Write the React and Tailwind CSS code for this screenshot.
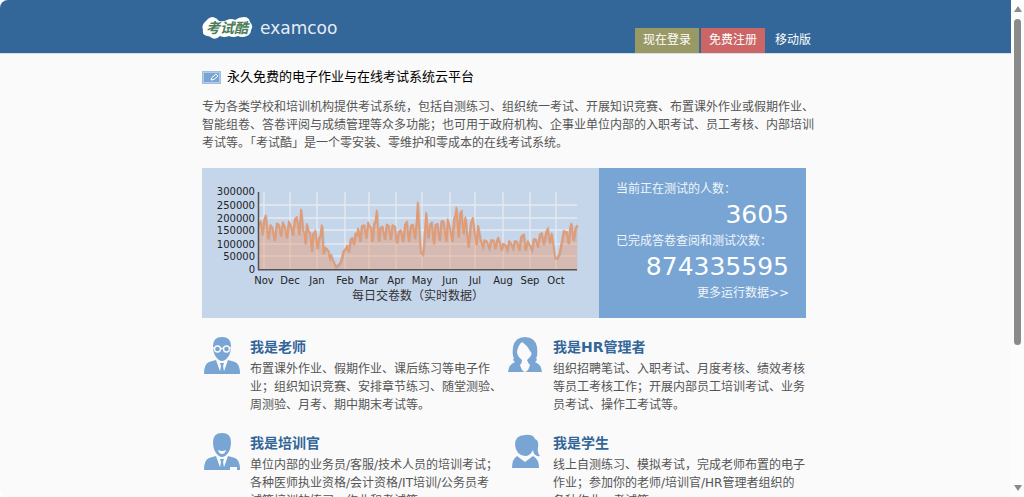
import React from "react";

const months = [
  ["Nov", 62],
  ["Dec", 88],
  ["Jan", 115],
  ["Feb", 143],
  ["Mar", 167],
  ["Apr", 194],
  ["May", 220],
  ["Jun", 248],
  ["Jul", 273],
  ["Aug", 301],
  ["Sep", 328],
  ["Oct", 354],
];

const levels = [
  ["300000", 23],
  ["250000", 37],
  ["200000", 50],
  ["150000", 62],
  ["100000", 76],
  ["50000", 88],
  ["0", 101],
];

// daily papers handed in, drawn on a grid three times finer than the chart
const series =
  "178,180 182,168 187,208 192,165 197,150 204,220 211,180 217,188 223,225 230,175 236,178 242,212 248,172 254,185 260,218 266,170 272,182 278,210 284,162 290,156 297,208 303,133 309,195 313,205 316,236 320,176 326,200 330,203 335,258 339,205 343,205 346,196 352,250 357,218 361,212 365,180 367,190 370,265 375,247 381,252 385,258 389,280 393,270 397,282 402,292 407,306 414,300 420,294 425,280 430,258 436,252 441,242 446,260 451,225 456,218 461,238 466,205 471,208 474,190 480,228 485,183 492,180 498,218 504,173 508,182 513,188 516,228 522,175 526,168 530,136 536,228 541,188 547,184 554,222 560,178 566,182 571,222 577,180 584,183 590,233 596,200 602,195 608,228 615,178 620,170 626,228 632,182 638,178 644,220 650,165 653,112 657,180 662,262 668,268 672,235 678,143 684,218 690,178 695,172 701,235 706,180 712,176 718,225 724,168 730,168 738,228 743,162 750,190 756,228 762,160 766,150 769,127 775,215 780,145 784,138 790,205 796,156 805,246 812,175 818,158 824,205 829,238 834,182 841,222 848,245 853,225 860,228 867,250 873,225 880,225 885,250 890,228 894,218 900,235 904,255 909,236 915,238 921,255 927,228 933,235 938,250 944,228 950,228 957,255 963,215 971,208 976,255 983,228 990,242 995,255 1001,222 1007,222 1013,245 1019,208 1025,204 1031,238 1037,205 1043,190 1049,235 1055,205 1060,240 1065,278 1071,280 1078,265 1085,230 1091,197 1096,202 1100,200 1105,235 1110,190 1114,175 1120,225 1126,190 1132,180";

const Chart = () => (
  <svg
    width="397"
    height="150"
    viewBox="0 0 397 150"
    className="block shrink-0"
    role="img"
    aria-label="每日交卷数"
  >
    <g stroke="#e6eaf1">
      {levels.slice(1, 6).map(([label, y]) => (
        <line key={label} x1="57" x2="375" y1={y} y2={y} strokeWidth="1.3" />
      ))}
      {months.map(([label, x]) => (
        <line key={label} x1={x} x2={x} y1="24" y2="101" strokeWidth="1.3" />
      ))}
    </g>
    <g transform="translate(-2 -3) scale(0.33333)">
      <polygon
        points={`176,314 ${series} 1132,314`}
        fill="#ea9060"
        fillOpacity="0.4"
      />
      <polyline
        points={series}
        fill="none"
        stroke="#a08c8c"
        strokeOpacity="0.4"
        strokeWidth="6"
        transform="translate(2 3)"
      />
      <polyline
        points={series}
        fill="none"
        stroke="#e59a6f"
        strokeWidth="5"
        strokeLinejoin="round"
      />
    </g>
    <path d="M56.5 24V102M56 101.8H375" stroke="#545454" strokeWidth="1.5" fill="none" />
    <g className="text-[10px]" fill="#222">
      {levels.map(([label, y]) => (
        <text key={label} x="53" y={y + 4} textAnchor="end">
          {label}
        </text>
      ))}
      {months.map(([label, x]) => (
        <text key={label} x={x} y="116" textAnchor="middle">
          {label}
        </text>
      ))}
    </g>
    <text x="216" y="132" textAnchor="middle" fill="#333" className="text-[12px]">
      每日交卷数（实时数据）
    </text>
  </svg>
);

const Logo = () => (
  <svg width="52" height="24" viewBox="0 0 52 24" className="block" aria-label="考试酷">
    <path
      d="M4 5Q7 1 11 1Q15 2 17 5Q21 6 25 4Q29 2 33 4Q37 1 42 1Q47 1 48 6Q52 10 49 14Q49 18 45 20Q40 22 36 20Q31 22 27 20Q22 22 18 20Q14 24 10 22Q8 20 5 20Q0 19 1 14Q-1 9 4 5Z"
      fill="#fff"
    />
    <text
      x="25"
      y="17"
      textAnchor="middle"
      fill="#4a7d58"
      className="text-[14px] font-bold italic"
    >
      考试酷
    </text>
  </svg>
);

const TeacherIcon = () => (
  <svg width="38" height="38" viewBox="0 0 38 38" fill="#78a5d3">
    <path d="M10 10Q10 1 19 1T28 10Q28 17 25 21Q22 25 19 25T13 21Q10 17 10 10Z" />
    <g fill="none" stroke="#fafafa" strokeWidth="1.4">
      <circle cx="14.5" cy="13" r="3" />
      <circle cx="23.5" cy="13" r="3" />
      <path d="M17.5 12.5H20.5M10 12H11.5M26.5 12H28" />
    </g>
    <path d="M1 38Q1 28 6 26L13 24L18 38Z" />
    <path d="M37 38Q37 28 32 26L25 24L20 38Z" />
    <path d="M17 27H21L20 30L21.5 38H16.5L18 30Z" />
  </svg>
);

const TrainerIcon = () => (
  <svg width="38" height="38" viewBox="0 0 38 38" fill="#78a5d3">
    <path d="M10 10Q10 1 19 1T28 10Q28 17 25 21Q22 25 19 25T13 21Q10 17 10 10Z" />
    <path d="M15 18Q19 20 23 18Q22 22 19 22T15 18Z" fill="#fafafa" />
    <path d="M1 38Q1 28 6 26L13 24L18 38Z" />
    <path d="M37 38Q37 28 32 26L25 24L20 38Z" />
    <path d="M17 27H21L20 30L21.5 38H16.5L18 30Z" />
    <path d="M27 35H34V39H27Z" fill="#fafafa" />
  </svg>
);

const ManagerIcon = () => (
  <svg width="38" height="38" viewBox="-2 0 38 38" fill="#78a5d3">
    <path d="M17 1Q27 1 29 11Q30 20 28 22Q30 24 27 26Q33 28 34 36H0Q1 28 7 26Q4 24 6 22Q4 20 5 11Q7 1 17 1Z" />
    <path
      d="M14 6Q19 9 22 15Q25 17 22 21L19 24Q20 27 22 29Q20 36 17 36Q14 36 12 29Q14 27 14 24Q9 20 9 16Q10 9 14 6Z"
      fill="#fafafa"
    />
  </svg>
);

const StudentIcon = () => (
  <svg width="38" height="38" viewBox="-2 0 38 38" fill="#78a5d3">
    <path d="M7 13Q7 3 17 3Q25 2 27 7Q31 8 30 15Q29 21 32 24Q26 25 25 18Q22 24 17 24Q8 23 7 13Z" />
    <path d="M4 36Q4 27 9 24L17 30L25 24Q31 27 31 36Z" />
  </svg>
);

const roles = [
  {
    title: "我是老师",
    Icon: TeacherIcon,
    lines: [
      "布置课外作业、假期作业、课后练习等电子作",
      "业；组织知识竞赛、安排章节练习、随堂测验、",
      "周测验、月考、期中期末考试等。",
    ],
  },
  {
    title: "我是HR管理者",
    Icon: ManagerIcon,
    lines: [
      "组织招聘笔试、入职考试、月度考核、绩效考核",
      "等员工考核工作；开展内部员工培训考试、业务",
      "员考试、操作工考试等。",
    ],
  },
  {
    title: "我是培训官",
    Icon: TrainerIcon,
    lines: [
      "单位内部的业务员/客服/技术人员的培训考试；",
      "各种医师执业资格/会计资格/IT培训/公务员考",
      "试等培训的练习、作业和考试等。",
    ],
  },
  {
    title: "我是学生",
    Icon: StudentIcon,
    lines: [
      "线上自测练习、模拟考试，完成老师布置的电子",
      "作业；参加你的老师/培训官/HR管理者组织的",
      "各种作业、考试等。",
    ],
  },
];

const Role = ({ title, Icon, lines }) => (
  <section className="flex h-[96px] whitespace-nowrap">
    <div className="w-12 shrink-0 pt-px pl-px">
      <Icon />
    </div>
    <div>
      <h2 className="text-[14px] leading-6 font-bold text-[#336699]">{title}</h2>
      <p className="pt-px leading-[18px]">
        {lines.map((line) => (
          <span key={line} className="block">
            {line}
          </span>
        ))}
      </p>
    </div>
  </section>
);

const Header = () => (
  <header className="border-b border-[#d3dfea] bg-[#336699]">
    <div className="mx-auto flex h-[53px] max-w-[607px] items-end justify-between">
      <a href="#" className="flex items-center gap-[6px] pb-[13px]">
        <Logo />
        <span className="text-[17px] leading-6 text-[#e4ecf5]">examcoo</span>
      </a>
      <nav className="-mr-[10px] flex gap-[2px] leading-[25px] text-white">
        <a href="#" className="bg-[#999966] px-2">
          现在登录
        </a>
        <a href="#" className="bg-[#cc6666] px-2">
          免费注册
        </a>
        <a href="#" className="px-2">
          移动版
        </a>
      </nav>
    </div>
  </header>
);

const Stats = () => (
  <div className="flex-1 bg-[#78a5d3] px-[17px] pt-3 text-[#f0f5fa]">
    <p className="leading-[18px]">当前正在测试的人数：</p>
    <p className="text-right text-[25px] leading-[34px] text-white">3605</p>
    <p className="leading-[18px]">已完成答卷查阅和测试次数：</p>
    <p className="text-right text-[25px] leading-[34px] text-white">874335595</p>
    <a href="#" className="block text-right leading-[18px]">
      更多运行数据&gt;&gt;
    </a>
  </div>
);

const ScrollBar = () => (
  <div className="flex w-[13px] shrink-0 flex-col items-center bg-[#fcfcfc] py-[6px]">
    <svg width="8" height="6" viewBox="0 0 8 6" fill="#8b8b8b">
      <path d="M4 0L8 6H0Z" />
    </svg>
    <div className="flex w-full flex-1 flex-col items-center pt-[7px]">
      <div className="h-[70%] w-[7px] rounded-full bg-[#8b8b8b]" />
    </div>
    <svg width="8" height="6" viewBox="0 0 8 6" fill="#8b8b8b">
      <path d="M0 0H8L4 6Z" />
    </svg>
  </div>
);

const App = () => {
  return (
    <div className="flex h-screen overflow-hidden rounded-lg bg-[#fafafa] font-['DejaVu_Sans','Noto_Sans_CJK_SC',sans-serif] text-[12px] text-[#555]">
      <div className="min-w-0 flex-1 overflow-hidden">
        <Header />
        <main className="mx-auto max-w-[607px] pr-[3px]">
          <h1 className="flex items-center gap-[6px] pt-3 text-[13px] leading-[22px] text-black">
            <svg width="19" height="13" viewBox="0 0 19 13">
              <rect width="19" height="13" fill="#9fbfdf" />
              <rect x="1.5" y="1.5" width="16" height="10" fill="#78a5d3" stroke="#c5d6eb" strokeWidth="0.7" />
              <path d="M9 9L10 6.5L14 3L16 5L12 8.5Z" fill="none" stroke="#fff" />
            </svg>
            永久免费的电子作业与在线考试系统云平台
          </h1>
          <p className="pt-[10px] leading-[18px] whitespace-nowrap">
            专为各类学校和培训机构提供考试系统，包括自测练习、组织统一考试、开展知识竞赛、布置课外作业或假期作业、
            <br />
            智能组卷、答卷评阅与成绩管理等众多功能；也可用于政府机构、企事业单位内部的入职考试、员工考核、内部培训
            <br />
            考试等。「考试酷」是一个零安装、零维护和零成本的在线考试系统。
          </p>
          <div className="mt-4 flex bg-[#c5d6eb]">
            <Chart />
            <Stats />
          </div>
          <div className="grid grid-cols-2 gap-x-[2px] pt-[17px]">
            {roles.map((role) => (
              <Role key={role.title} {...role} />
            ))}
          </div>
        </main>
      </div>
      <ScrollBar />
    </div>
  );
};

export default App;
